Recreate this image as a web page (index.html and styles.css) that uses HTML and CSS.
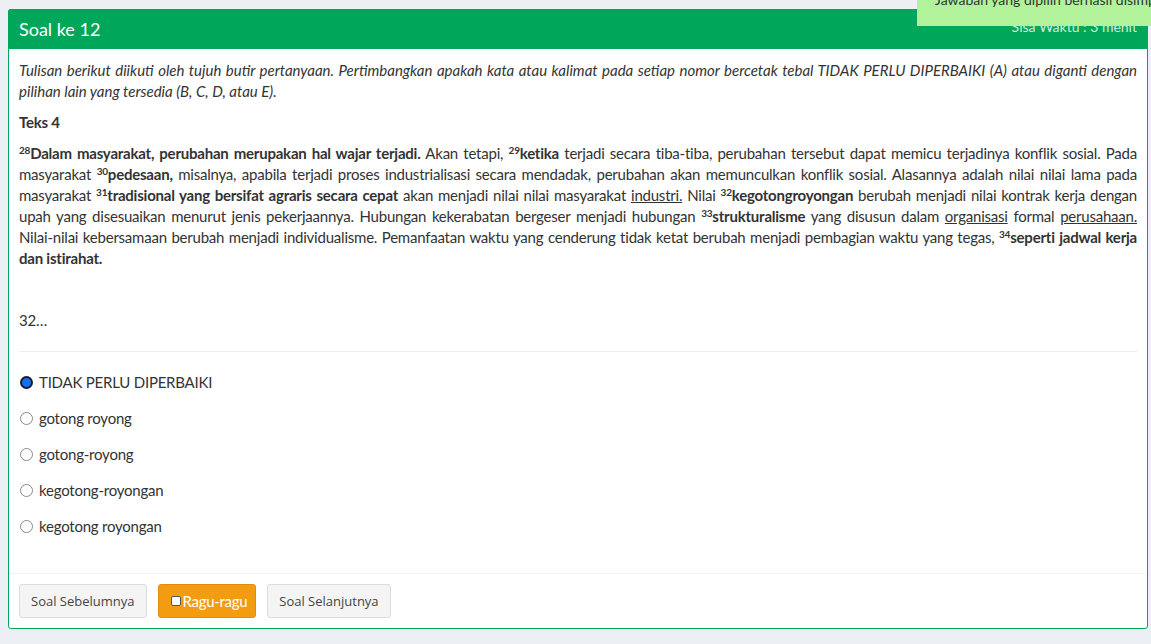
FILE: index.html
```html
<!DOCTYPE html>
<html lang="id">
<head>
<meta charset="utf-8">
<title>Soal ke 12</title>
<link rel="stylesheet" href="styles.css">
</head>
<body>
<div class="page">
  <div class="box">
    <div class="box-header">
      <h3 class="box-title">Soal ke 12</h3>
      <span class="timer">Sisa Waktu : 3 menit</span>
    </div>
    <div class="box-body">
      <p class="intro">Tulisan berikut diikuti oleh tujuh butir pertanyaan. Pertimbangkan apakah kata atau kalimat pada setiap nomor bercetak tebal TIDAK PERLU DIPERBAIKI (A) atau diganti dengan pilihan lain yang tersedia (B, C, D, atau E).</p>
      <p class="title"><b>Teks 4</b></p>
      <p class="passage"><b><sup>28</sup>Dalam masyarakat, perubahan merupakan hal wajar terjadi.</b> Akan tetapi, <b><sup>29</sup>ketika</b> terjadi secara tiba-tiba, perubahan tersebut dapat memicu terjadinya konflik sosial. Pada masyarakat <b><sup>30</sup>pedesaan,</b> misalnya, apabila terjadi proses industrialisasi secara mendadak, perubahan akan memunculkan konflik sosial. Alasannya adalah nilai nilai lama pada masyarakat <b><sup>31</sup>tradisional yang bersifat agraris secara cepat</b> akan menjadi nilai nilai masyarakat <u>industri.</u> Nilai <b><sup>32</sup>kegotongroyongan</b> berubah menjadi nilai kontrak kerja dengan upah yang disesuaikan menurut jenis pekerjaannya. Hubungan kekerabatan bergeser menjadi hubungan <b><sup>33</sup>strukturalisme</b> yang disusun dalam <u>organisasi</u> formal <u>perusahaan.</u> Nilai-nilai kebersamaan berubah menjadi individualisme. Pemanfaatan waktu yang cenderung tidak ketat berubah menjadi pembagian waktu yang tegas, <b><sup>34</sup>seperti jadwal kerja dan istirahat.</b></p>
      <p class="blank"><br></p>
      <p class="question">32…</p>
      <hr class="divider">
      <div class="options">
        <div class="option"><span class="radio checked"></span><span>TIDAK PERLU DIPERBAIKI</span></div>
        <div class="option"><span class="radio"></span><span>gotong royong</span></div>
        <div class="option"><span class="radio"></span><span>gotong-royong</span></div>
        <div class="option"><span class="radio"></span><span>kegotong-royongan</span></div>
        <div class="option"><span class="radio"></span><span>kegotong royongan</span></div>
      </div>
    </div>
    <div class="box-footer">
      <button class="btn btn-default">Soal Sebelumnya</button>
      <button class="btn btn-warning"><span class="check"></span>Ragu-ragu</button>
      <button class="btn btn-default">Soal Selanjutnya</button>
    </div>
  </div>
</div>
<div class="notify"><span class="notify-text">Jawaban yang dipilih berhasil disimpan</span></div>
</body>
</html>
```

FILE: styles.css
```css
html, body {
  margin: 0;
  padding: 0;
}
body {
  background: #ecf0f5;
  font-family: "Lato", "Noto Sans", sans-serif;
  font-size: 15px;
  line-height: 21px;
  color: #333;
  height: 644px;
  overflow: hidden;
}
.page {
  padding: 9px 3px 0 8px;
}
.box {
  background: #fff;
  border: 1px solid #00a65a;
  border-radius: 3px;
}
.box-header {
  background: #00a65a;
  color: #fff;
  height: 40px;
  margin: -1px -1px 0 -1px;
  padding: 0 11px;
  display: flex;
  align-items: center;
  justify-content: space-between;
  border-radius: 3px 3px 0 0;
}
.box-title {
  margin: 0;
  font-size: 18px;
  font-weight: 400;
  line-height: 20px;
}
.timer {
  font-size: 14px;
  color: #cdeedb;
  margin-top: -6px;
}
.box-body {
  padding: 11px 10px 36px 10px;
  letter-spacing: -0.22px;
}
p {
  margin: 0 0 10px 0;
}
.intro {
  font-style: italic;
  text-align: justify;
  letter-spacing: 0;
}
.passage {
  text-align: justify;
}
sup {
  font-size: 10px;
  line-height: 0;
  vertical-align: 5px;
}
.question {
  margin: 0;
}
.divider {
  border: 0;
  border-top: 1px solid #eee;
  margin: 20px 0;
}
.options {
  display: flex;
  flex-direction: column;
  gap: 15px;
}
.option {
  display: flex;
  align-items: center;
  gap: 6px;
  height: 21px;
  padding-left: 1px;
}
.radio {
  width: 13px;
  height: 13px;
  border: 1px solid #8a8a8a;
  border-radius: 50%;
  box-sizing: border-box;
  background: #fff;
}
.radio.checked {
  background: #1271f0;
  border: 2px solid #1a1a2a;
}
.box-footer {
  border-top: 1px solid #f4f4f4;
  padding: 10px;
  display: flex;
  gap: 11px;
}
.btn {
  height: 34px;
  border-radius: 3px;
  border: 1px solid #ddd;
  cursor: pointer;
}
.btn-default {
  background: #f4f4f4;
  color: #444;
  font-family: "Open Sans", "Noto Sans", sans-serif;
  font-size: 13px;
  padding: 0 11px;
}
.btn-warning {
  background: #f39c12;
  border-color: #e08e0b;
  color: #fff;
  font-family: "Lato", "Noto Sans", sans-serif;
  font-size: 15px;
  letter-spacing: -0.3px;
  display: flex;
  align-items: center;
  gap: 2px;
  padding: 0 8px 0 12px;
}
.check {
  width: 10px;
  height: 10px;
  background: #fff;
  border: 1px solid #555;
  border-radius: 2px;
  box-sizing: border-box;
}
.notify {
  position: absolute;
  top: 0;
  left: 917px;
  width: 260px;
  height: 26px;
  background: #b2f29b;
  color: #333;
  font-size: 14px;
  line-height: 14px;
  box-sizing: border-box;
  overflow: hidden;
  white-space: nowrap;
}
.notify-text {
  display: block;
  margin: -7px 0 0 18px;
}
```
